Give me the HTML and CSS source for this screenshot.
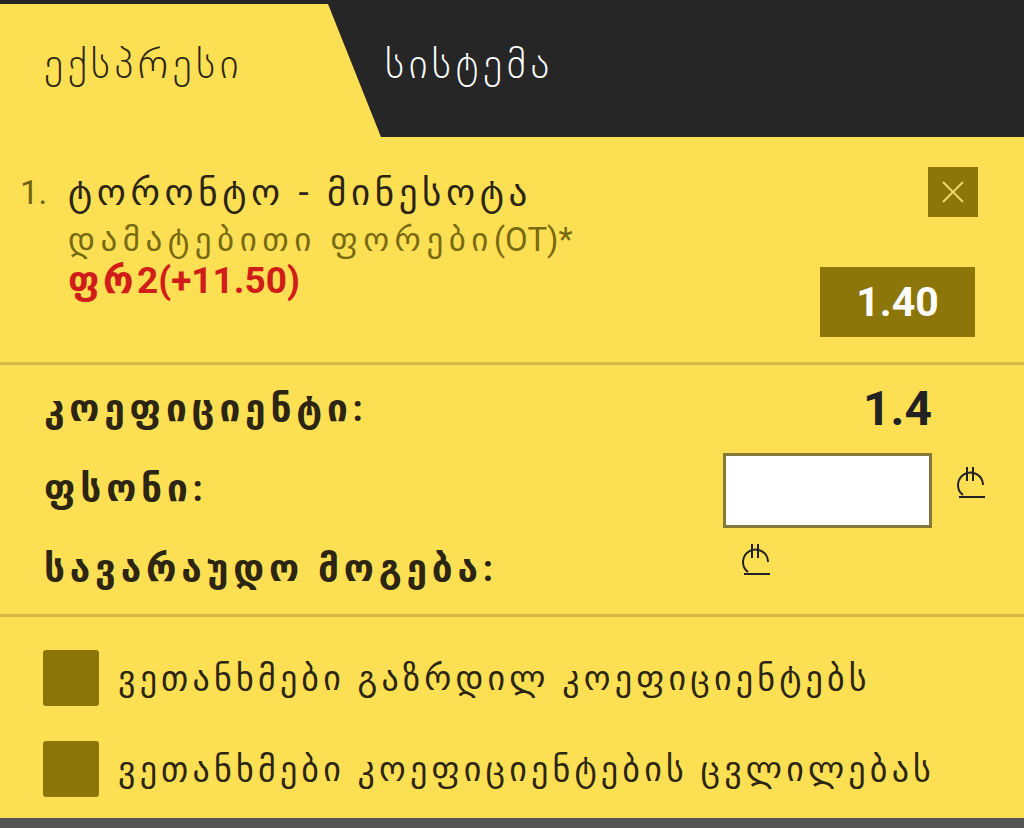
FILE: index.html
```html
<!DOCTYPE html>
<html lang="ka">
  <head>
    <meta charset="UTF-8" />
    <meta name="viewport" content="width=device-width, initial-scale=1.0" />
    <title>ბილეთი</title>
    <link rel="stylesheet" href="styles.css">
  </head>
  <body>
    <div class="slip">
      <div class="tabs">
        <div class="tab tab-active">ექსპრესი</div>
        <div class="tab">სისტემა</div>
      </div>

      <div class="bet">
        <span class="bet-num">1.</span>
        <div class="bet-info">
          <div class="bet-match">ტორონტო - მინესოტა</div>
          <div class="bet-market">დამატებითი ფორები<span class="lat">(OT)*</span></div>
          <div class="bet-pick">ფრ<span class="lat">2(+11.50)</span></div>
        </div>
        <div class="bet-side">
          <button class="bet-close" aria-label="close">
            <svg width="24" height="24" viewBox="0 0 24 24">
              <path d="M2 2 L22 22 M22 2 L2 22" stroke="#ecd56c" stroke-width="2" fill="none" />
            </svg>
          </button>
          <div class="bet-odds">1.40</div>
        </div>
      </div>

      <div class="summary">
        <div class="summary-label">კოეფიციენტი:</div>
        <div class="summary-value">1.4</div>
        <div></div>

        <div class="summary-label">ფსონი:</div>
        <input class="stake" type="text" />
        <div class="lari lari-after">
          <svg width="34" height="36" viewBox="0 0 34 36">
            <path d="M13 3 V17 M19 3 V17 M9 31 A12.5 12.5 0 1 1 29 21 M5 33 H31" stroke="#222" stroke-width="2" fill="none" />
          </svg>
        </div>

        <div class="summary-label">სავარაუდო მოგება:</div>
        <div class="lari lari-win">
          <svg width="34" height="36" viewBox="0 0 34 36">
            <path d="M13 3 V17 M19 3 V17 M9 31 A12.5 12.5 0 1 1 29 21 M5 33 H31" stroke="#222" stroke-width="2" fill="none" />
          </svg>
        </div>
        <div></div>
      </div>

      <div class="agree">
        <label class="agree-row">
          <span class="check"></span>
          <span>ვეთანხმები გაზრდილ კოეფიციენტებს</span>
        </label>
        <label class="agree-row">
          <span class="check"></span>
          <span>ვეთანხმები კოეფიციენტების ცვლილებას</span>
        </label>
      </div>
      <div class="footer-bar"></div>
    </div>
  </body>
</html>
```

FILE: styles.css
```css
/* General styles */
body {
  margin: 0;
  font-family: Roboto, "DejaVu Sans", sans-serif;
  background-color: #fddf54;
  color: #2b2511;
}

.slip {
  width: 1024px;
  height: 828px;
  display: flex;
  flex-direction: column;
  overflow: hidden;
}

.lat {
  letter-spacing: 0;
}

/* Tabs */
.tabs {
  display: flex;
  height: 133px;
  padding-top: 4px;
  background-color: #262626;
}

.tab {
  display: flex;
  align-items: center;
  padding-bottom: 14px;
  font-family: "DejaVu Sans", sans-serif;
  font-weight: 200;
  font-size: 40px;
  letter-spacing: 4.5px;
  color: #fff;
}

.tab-active {
  width: 381px;
  padding-left: 44px;
  box-sizing: border-box;
  background-color: #fddf54;
  color: #2b2511;
  clip-path: polygon(0 0, 328px 0, 100% 100%, 0 100%);
}

.tab:not(.tab-active) {
  padding-left: 4px;
}

/* Selected bet */
.bet {
  display: flex;
  padding: 30px 49px 25px 20px;
  border-bottom: 3px solid #d3ba46;
}

.bet-num {
  width: 48px;
  font-size: 33px;
  color: #6f6412;
  line-height: 52px;
}

.bet-info {
  flex: 1;
}

.bet-match {
  font-size: 37px;
  letter-spacing: 4.6px;
  line-height: 52px;
}

.bet-market {
  font-size: 33px;
  letter-spacing: 5.5px;
  line-height: 42px;
  color: #786a10;
}

.bet-pick {
  font-size: 37px;
  font-weight: bold;
  letter-spacing: 3.5px;
  line-height: 40px;
  color: #d01d1a;
}

.bet-side {
  display: flex;
  flex-direction: column;
  align-items: flex-end;
}

.bet-close {
  width: 50px;
  height: 50px;
  border: none;
  padding: 0;
  margin-right: -3px;
  display: flex;
  align-items: center;
  justify-content: center;
  background-color: #8c7609;
}

.bet-odds {
  margin-top: 50px;
  width: 155px;
  height: 70px;
  display: flex;
  align-items: center;
  justify-content: center;
  background-color: #8c7609;
  color: #fff;
  font-size: 41px;
  font-weight: bold;
}

/* Totals */
.summary {
  display: grid;
  grid-template-columns: 1fr 209px 92px;
  grid-auto-rows: 80px;
  align-items: center;
  padding: 3px 0 6px 44px;
  border-bottom: 3px solid #d3ba46;
}

.summary-label {
  font-size: 37px;
  font-weight: bold;
  letter-spacing: 4.8px;
}

.summary-value {
  text-align: right;
  font-size: 48px;
  font-weight: bold;
  color: #222;
}

.stake {
  box-sizing: border-box;
  width: 209px;
  height: 75px;
  margin-top: 4px;
  border: 3px solid #857838;
  background-color: #fff;
}

.lari {
  display: flex;
}

.lari-after {
  padding-left: 22px;
  padding-bottom: 12px;
}

.lari-win {
  padding-left: 16px;
  padding-bottom: 18px;
}

/* Checkboxes */
.agree {
  flex: 1;
  display: flex;
  flex-direction: column;
  gap: 35px;
  padding: 33px 0 0 43px;
}

.agree-row {
  display: flex;
  align-items: center;
  gap: 19px;
  font-size: 34px;
  letter-spacing: 4.2px;
}

.check {
  width: 56px;
  height: 56px;
  border-radius: 3px;
  background-color: #8c7609;
}

.footer-bar {
  height: 10px;
  background-color: #555;
}
```
